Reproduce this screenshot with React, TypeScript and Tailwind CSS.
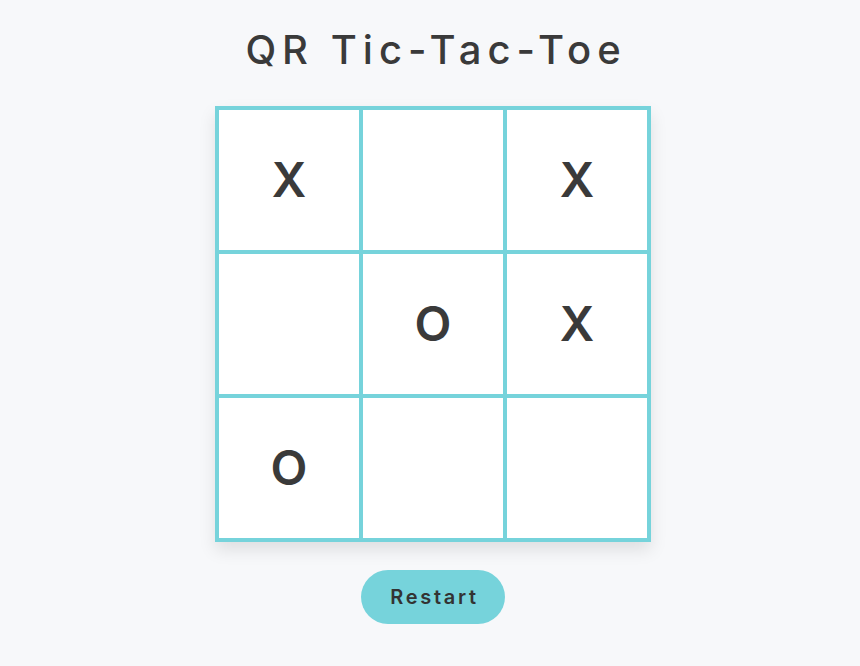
import { useState } from "react";

const initialBoard: string[] = ["X", "", "X", "", "O", "X", "O", "", ""];

export default function App() {
  const [board, setBoard] = useState<string[]>(initialBoard);
  const [turn, setTurn] = useState<"X" | "O">("O");

  const play = (i: number) => {
    if (board[i]) return;
    const next = [...board];
    next[i] = turn;
    setBoard(next);
    setTurn(turn === "X" ? "O" : "X");
  };

  const restart = () => {
    setBoard(Array(9).fill(""));
    setTurn("X");
  };

  return (
    <div
      className="min-h-screen bg-[#f7f8fa] flex flex-col items-center pl-[6px]"
      style={{ fontFamily: 'Inter, "Liberation Sans", Arial, sans-serif' }}
    >
      {/* Title */}
      <h1 className="pt-[26px] pl-[6px] text-[40px] leading-[48px] font-medium tracking-[0.15em] text-[#3a3a3a]">
        QR Tic-Tac-Toe
      </h1>

      {/* Board */}
      <div className="mt-8 grid grid-cols-3 border-2 border-[#76d3db] bg-white shadow-[0_8px_16px_rgba(0,0,0,0.1)]">
        {board.map((cell, i) => (
          <button
            key={i}
            onClick={() => play(i)}
            className="w-[144px] h-[144px] border-2 border-[#76d3db] bg-white flex items-center justify-center text-[48px] leading-none font-semibold text-[#3a3a3a] cursor-pointer"
          >
            {cell}
          </button>
        ))}
      </div>

      {/* Restart */}
      <button
        onClick={restart}
        className="mt-7 w-[144px] h-[54px] rounded-full bg-[#76d3db] pl-[3px] text-[20px] font-semibold tracking-[0.135em] text-[#333333] cursor-pointer"
      >
        Restart
      </button>
    </div>
  );
}
